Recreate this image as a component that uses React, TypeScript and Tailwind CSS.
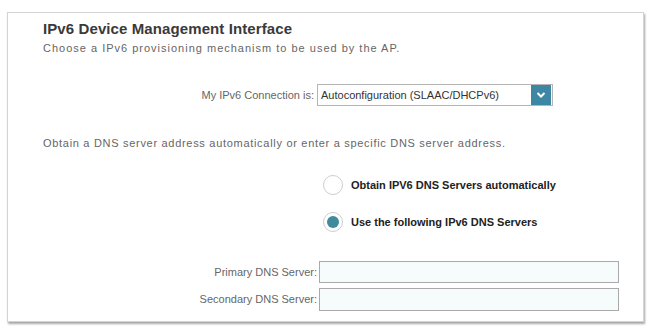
const font = { fontFamily: '"Liberation Sans", Arial, sans-serif' };

const Radio = ({ checked, label }: { checked?: boolean; label: string }) => (
  <div className="flex items-center gap-[8px] h-[22px]">
    <div className="w-[20px] h-[20px] rounded-full border-[1.5px] border-[#c9cfd2] bg-white flex items-center justify-center">
      {checked ? <div className="w-[12px] h-[12px] rounded-full bg-[#3f8b9c]" /> : null}
    </div>
    <span className="text-[11px] font-bold text-[#222]">{label}</span>
  </div>
);

export default function App() {
  return (
    <div className="w-[648px] h-[326px] bg-white pt-[12px] pl-[7px]" style={font}>
      <div className="w-[637px] h-[310px] border border-[#d4d4d4] shadow-[1px_2px_2px_rgba(0,0,0,0.35)] bg-white pl-[35px] pt-[6px]">
        <h1 className="text-[15px] font-bold text-[#3a3a3a] leading-[19px] tracking-[0.1px]">IPv6 Device Management Interface</h1>
        <p className="text-[11px] text-[#666] leading-[14px] mt-[3px] tracking-[1px]">
          Choose a IPv6 provisioning mechanism to be used by the AP.
        </p>

        <div className="flex items-center mt-[29px] h-[22px]">
          <span className="w-[274px] text-right text-[11px] text-[#666] pr-[3px]">My IPv6 Connection is:</span>
          <div className="flex items-center w-[236px] h-[22px] border border-[#b5b5b5] bg-white">
            <span className="flex-1 pl-[3px] text-[11px] text-[#333]">Autoconfiguration (SLAAC/DHCPv6)</span>
            <div className="w-[20px] h-[20px] mr-[1px] bg-[#3d86a4] flex items-center justify-center">
              <svg width="10" height="8" viewBox="0 0 10 8">
                <path d="M1.5 2 L5 5.5 L8.5 2" stroke="#fff" strokeWidth="2" fill="none" />
              </svg>
            </div>
          </div>
        </div>

        <p className="text-[11px] text-[#666] leading-[14px] mt-[30px] tracking-[0.7px]">
          Obtain a DNS server address automatically or enter a specific DNS server address.
        </p>

        <div className="flex flex-col gap-[15px] pl-[280px] mt-[24px]">
          <Radio label="Obtain IPV6 DNS Servers automatically" />
          <Radio checked label="Use the following IPv6 DNS Servers" />
        </div>

        <div className="flex flex-col gap-[5px] mt-[28px]">
          <div className="flex items-center h-[22px]">
            <span className="w-[276px] text-right text-[11px] text-[#666] pr-[2px]">Primary DNS Server:</span>
            <div className="w-[300px] h-[22px] border border-[#a9a9a9] bg-[#f6fbfb]" />
          </div>
          <div className="flex items-center h-[23px]">
            <span className="w-[276px] text-right text-[11px] text-[#666] pr-[2px]">Secondary DNS Server:</span>
            <div className="w-[300px] h-[23px] border border-[#a9a9a9] bg-[#f6fbfb]" />
          </div>
        </div>
      </div>
    </div>
  );
}
